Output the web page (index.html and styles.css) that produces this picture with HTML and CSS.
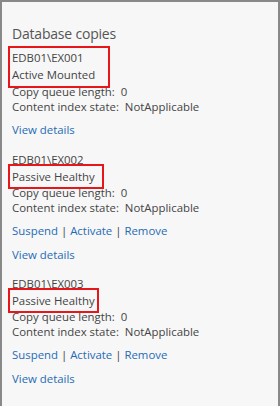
FILE: index.html
```html
<!DOCTYPE html>
<html lang="en">
<head>
    <meta charset="UTF-8">
    <meta name="viewport" content="width=device-width, initial-scale=1.0">
    <title>Database copies</title>
    <link rel="stylesheet" href="styles.css">
</head>
<body>
    <div id="panel">
        <h2>Database copies</h2>

        <div class="copy">
            <div class="mark first">
                <div class="line">EDB01\EX001</div>
                <div class="line status">Active Mounted</div>
            </div>
            <div class="line queue">Copy queue length:&nbsp; 0</div>
            <div class="line">Content index state:&nbsp; NotApplicable</div>
            <div class="actions"><a href="#">View details</a></div>
        </div>

        <div class="copy">
            <div class="line">EDB01\EX002</div>
            <div class="line status"><span class="mark wide">Passive Healthy</span></div>
            <div class="line queue">Copy queue length:&nbsp; 0</div>
            <div class="line">Content index state:&nbsp; NotApplicable</div>
            <div class="actions"><a href="#">Suspend</a> | <a href="#">Activate</a> | <a href="#">Remove</a></div>
            <div class="actions"><a href="#">View details</a></div>
        </div>

        <div class="copy">
            <div class="line">EDB01\EX003</div>
            <div class="line status"><span class="mark">Passive Healthy</span></div>
            <div class="line queue">Copy queue length:&nbsp; 0</div>
            <div class="line">Content index state:&nbsp; NotApplicable</div>
            <div class="actions"><a href="#">Suspend</a> | <a href="#">Activate</a> | <a href="#">Remove</a></div>
            <div class="actions"><a href="#">View details</a></div>
        </div>
    </div>
</body>
</html>
```

FILE: styles.css
```css
body {
    margin: 0;
    padding: 0;
    font-family: "Open Sans", "Noto Sans", sans-serif;
    font-size: 11.4px;
    color: #444;
}
#panel {
    box-sizing: border-box;
    height: 100vh;
    background-color: #f7f7f7;
    border: 2px solid #898989;
    border-bottom: none;
    padding: 22px 10px 0;
}
#panel h2 {
    margin: 0 0 6px;
    font-size: 14px;
    font-weight: normal;
    letter-spacing: -0.2px;
    line-height: 20px;
    color: #555;
}
.copy {
    margin-bottom: 13px;
}
.copy:first-of-type {
    margin-bottom: 14px;
}
.line {
    line-height: 16px;
    white-space: nowrap;
}
.line.status {
    line-height: 17px;
}
.line.queue {
    line-height: 15px;
}
.mark {
    display: inline-block;
    outline: 2px solid #e8151b;
    outline-offset: 2px;
}
.mark.first {
    padding-right: 11px;
    padding-bottom: 1px;
}
.mark.wide {
    padding-right: 5px;
}
.actions {
    margin-top: 7px;
    line-height: 16px;
    color: #444;
}
.actions + .actions {
    margin-top: 8px;
}
.actions a {
    color: #1f6bb5;
    text-decoration: none;
}
```
